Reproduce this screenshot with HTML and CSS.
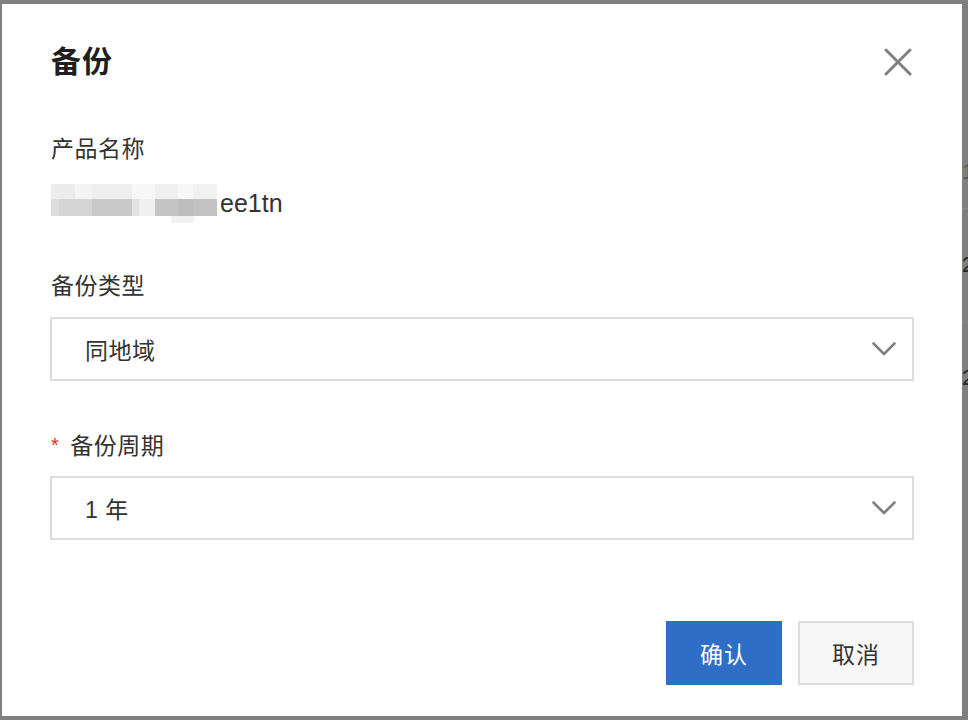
FILE: index.html
```html
<!DOCTYPE html>
<html lang="zh-CN">
<head>
<meta charset="utf-8">
<title>备份</title>
<link rel="stylesheet" href="styles.css">
</head>
<body>
<div class="backdrop">
  <span class="bg-text bg-1">1</span>
  <span class="bg-text bg-2">2</span>
  <span class="bg-text bg-3">2</span>
  <span class="bg-line bg-l1"></span>
  <span class="bg-line bg-l2"></span>
</div>
<div class="dialog">
  <div class="header">
    <div class="title">备份</div>
    <svg class="close" width="28" height="28" viewBox="0 0 28 28">
      <path d="M2 2 L26 26 M26 2 L2 26" stroke="#808080" stroke-width="3" stroke-linecap="round" fill="none"/>
    </svg>
  </div>
  <div class="label l1">产品名称</div>
  <div class="value">
    <svg class="blur" width="169" height="40" viewBox="0 0 169 40">
      <rect x="0" y="0" width="24" height="15" fill="#ececec"/>
      <rect x="24" y="0" width="17" height="15" fill="#f4f4f4"/>
      <rect x="41" y="0" width="40" height="15" fill="#eeeeee"/>
      <rect x="81" y="0" width="23" height="15" fill="#f7f7f7"/>
      <rect x="104" y="0" width="23" height="15" fill="#f0f0f0"/>
      <rect x="127" y="0" width="15" height="15" fill="#f7f7f7"/>
      <rect x="142" y="0" width="24" height="15" fill="#f1f1f1"/>
      <rect x="0" y="15" width="8" height="17" fill="#dcdcdc"/>
      <rect x="8" y="15" width="33" height="17" fill="#d5d5d5"/>
      <rect x="41" y="15" width="40" height="17" fill="#c9c9c9"/>
      <rect x="81" y="15" width="7" height="17" fill="#e2e2e2"/>
      <rect x="88" y="15" width="16" height="17" fill="#f0f0f0"/>
      <rect x="104" y="15" width="23" height="17" fill="#c5c5c5"/>
      <rect x="127" y="15" width="15" height="17" fill="#bdbdbd"/>
      <rect x="142" y="15" width="24" height="17" fill="#c2c2c2"/>
      <rect x="120" y="32" width="23" height="7" fill="#f2f2f2"/>
    </svg>
    <span class="value-text">ee1tn</span>
  </div>
  <div class="label l2">备份类型</div>
  <div class="select">
    <span class="select-text">同地域</span>
    <svg class="chevron" width="24" height="14" viewBox="0 0 24 14">
      <path d="M1.5 1.5 L12 12 L22.5 1.5" stroke="#808080" stroke-width="2.6" stroke-linecap="round" stroke-linejoin="round" fill="none"/>
    </svg>
  </div>
  <div class="label l3"><span class="req">*</span>备份周期</div>
  <div class="select select-2">
    <span class="select-text">1 年</span>
    <svg class="chevron" width="24" height="14" viewBox="0 0 24 14">
      <path d="M1.5 1.5 L12 12 L22.5 1.5" stroke="#808080" stroke-width="2.6" stroke-linecap="round" stroke-linejoin="round" fill="none"/>
    </svg>
  </div>
  <div class="footer">
    <button class="btn btn-primary">确认</button>
    <button class="btn btn-default">取消</button>
  </div>
</div>
</body>
</html>
```

FILE: styles.css
```css
html, body {
  margin: 0;
  padding: 0;
}
body {
  width: 968px;
  height: 720px;
  background: #7f7f7f;
  font-family: "Liberation Sans", "Noto Sans CJK SC", sans-serif;
  color: #333333;
  overflow: hidden;
  position: relative;
}
.backdrop {
  position: absolute;
  inset: 0;
}
.bg-text {
  position: absolute;
  left: 962px;
  font-size: 22px;
  line-height: 24px;
  color: #262626;
}
.bg-1 { top: 160px; color: #5a5a5a; }
.bg-2 { top: 253px; }
.bg-3 { top: 366px; }
.bg-line {
  position: absolute;
  left: 962px;
  width: 6px;
  height: 1px;
  background: #8a8a8a;
}
.bg-l1 { top: 208px; }
.bg-l2 { top: 322px; }

.dialog {
  position: relative;
  margin: 4px 0 0 2px;
  width: 960px;
  height: 712px;
  background: #ffffff;
  box-sizing: border-box;
  padding: 0 48px;
  display: flex;
  flex-direction: column;
}
.header {
  height: 116px;
  display: flex;
  align-items: center;
  justify-content: space-between;
  padding-left: 1px;
}
.title {
  font-size: 30px;
  font-weight: 700;
  color: #1f1f1f;
  line-height: 40px;
  letter-spacing: 1px;
}
.close {
  margin-right: 2px;
}
.label {
  font-size: 23px;
  line-height: 34px;
  color: #333333;
  padding-left: 1px;
  letter-spacing: 0.5px;
}
.l1 { margin-top: 12px; }
.l2 { margin-top: 46px; }
.l3 { margin-top: 48px; }
.req {
  color: #d93026;
  font-size: 20px;
  margin-right: 11px;
  position: relative;
  top: -2px;
}
.value {
  margin-top: 17px;
  height: 40px;
  display: flex;
  align-items: center;
  padding-left: 1px;
}
.blur {
  display: block;
  margin-top: 2px;
}
.value-text {
  font-size: 25px;
  color: #333333;
  margin-left: 0;
  position: relative;
  top: 0;
}
.select {
  margin-top: 14px;
  height: 64px;
  box-sizing: border-box;
  border: 2px solid #dddddd;
  display: flex;
  align-items: center;
  justify-content: space-between;
  padding: 0 16px 0 33px;
}
.select-2 {
  margin-top: 12px;
}
.select-text {
  font-size: 23px;
  color: #333333;
  letter-spacing: 0.5px;
}
.chevron {
  display: block;
}
.footer {
  margin-top: 81px;
  display: flex;
  justify-content: flex-end;
  gap: 16px;
}
.btn {
  width: 116px;
  height: 64px;
  font-family: "Liberation Sans", "Noto Sans CJK SC", sans-serif;
  font-size: 23px;
  box-sizing: border-box;
  margin: 0;
  padding: 0;
  letter-spacing: 1px;
}
.btn-primary {
  background: #2f6ec6;
  color: #ffffff;
  border: none;
}
.btn-default {
  background: #f7f7f7;
  color: #333333;
  border: 2px solid #dddddd;
}
```
